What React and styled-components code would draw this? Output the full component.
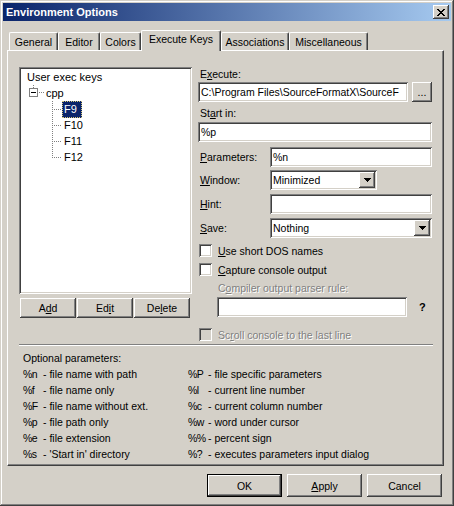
import React from 'react';
import styled, {createGlobalStyle, css} from 'styled-components';

const face = '#D4D0C8';
const light = '#FFFFFF';
const shadow = '#808080';
const darkShadow = '#404040';
const navy = '#0A246A';

const GlobalStyle = createGlobalStyle`
	html, body {
		margin: 0;
		padding: 0;
		background: ${face};
	}
	body {
		font-family: "Liberation Sans", Arial, sans-serif;
		font-size: 10.5px;
		color: #000;
	}
	* {
		box-sizing: border-box;
	}
`;

const raised = css`
	box-shadow: inset -1px -1px ${darkShadow}, inset 1px 1px ${light}, inset -2px -2px ${shadow}, inset 2px 2px ${face};
`;

const sunken = css`
	box-shadow: inset 1px 1px ${shadow}, inset -1px -1px ${light}, inset 2px 2px ${darkShadow}, inset -2px -2px ${face};
`;

const disabledText = css`
	color: ${shadow};
	text-shadow: 1px 1px 0 ${light};
`;

const Window = styled.div`
	width: 454px;
	height: 506px;
	padding: 3px;
	display: flex;
	flex-direction: column;
	background: ${face};
	box-shadow: inset -1px -1px ${darkShadow}, inset 1px 1px ${face}, inset -2px -2px ${shadow}, inset 2px 2px ${light};
`;

const TitleBar = styled.div`
	height: 18px;
	flex: none;
	display: flex;
	align-items: center;
	justify-content: space-between;
	padding: 0 2px 0 3px;
	background: linear-gradient(to right, ${navy}, #A6CAF0);
	color: #fff;
	font-size: 11px;
	font-weight: bold;
`;

const CloseButton = styled.span`
	width: 16px;
	height: 14px;
	display: flex;
	align-items: center;
	justify-content: center;
	background: ${face};
	${raised};
`;

const Body = styled.div`
	flex: 1;
	display: flex;
	flex-direction: column;
	padding: 9px 7px 0 4px;
`;

const TabStrip = styled.div`
	height: 20px;
	display: flex;
	align-items: flex-end;
	padding-left: 2px;
	position: relative;
	z-index: 1;
`;

const Tab = styled.div`
	width: ${p => p.$w}px;
	height: ${p => p.$active ? 21 : 18}px;
	margin-bottom: ${p => p.$active ? -1 : 0}px;
	padding-bottom: ${p => p.$active ? 4 : 0}px;
	display: flex;
	align-items: center;
	justify-content: center;
	background: ${face};
	border-top: 1px solid ${light};
	border-left: 1px solid ${light};
	border-right: 1px solid ${darkShadow};
	border-radius: 2px 2px 0 0;
	box-shadow: inset -1px 0 ${shadow};
	white-space: nowrap;
`;

const Panel = styled.div`
	height: 416px;
	flex: none;
	display: flex;
	flex-direction: column;
	padding: 16px 10px 0 11px;
	border-top: 1px solid ${light};
	border-left: 1px solid ${light};
	border-right: 1px solid ${darkShadow};
	border-bottom: 1px solid ${darkShadow};
	box-shadow: inset -1px -1px ${shadow};
`;

const TopGrid = styled.div`
	display: grid;
	grid-template-columns: 173px 234px;
	column-gap: 6px;
`;

const LeftColumn = styled.div`
	display: flex;
	flex-direction: column;
`;

const TreeBox = styled.div`
	height: 227px;
	padding: 2px;
	background: #fff;
	${sunken};
`;

const TreeRow = styled.div`
	height: 16px;
	display: flex;
	align-items: center;
	padding-left: ${p => p.$indent}px;
	white-space: nowrap;
`;

const NodeText = styled.span`
	height: 17px;
	line-height: 15px;
	padding: 0 4px 0 1px;
	font-size: 11px;
	border: 1px ${p => p.$selected ? 'dotted #D8C878' : 'solid transparent'};
	background: ${p => p.$selected ? navy : 'transparent'};
	color: ${p => p.$selected ? '#fff' : '#000'};
`;

const ButtonRow = styled.div`
	display: grid;
	grid-template-columns: repeat(3, 1fr);
	column-gap: 1px;
	margin-top: 4px;
	padding: 0 2px 0 1px;
`;

const Button = styled.button`
	height: ${p => p.$h || 23}px;
	width: ${p => p.$w ? `${p.$w}px` : 'auto'};
	padding: 0;
	border: ${p => p.$default ? '1px solid #000' : 'none'};
	background: ${face};
	font: inherit;
	color: #000;
	${raised};
`;

const RightColumn = styled.div`
	display: flex;
	flex-direction: column;
`;

const Label = styled.div`
	height: 14px;
	line-height: 14px;
	margin-top: ${p => p.$mt || 0}px;
	padding-left: ${p => p.$indent || 2}px;
	white-space: nowrap;
	${p => p.$disabled && disabledText};
`;

const Row = styled.div`
	display: flex;
	align-items: center;
	margin-top: ${p => p.$mt || 0}px;
	padding-left: ${p => p.$indent || 0}px;
`;

const RowLabel = styled.span`
	width: 72px;
	flex: none;
	padding-left: 2px;
	white-space: nowrap;
`;

const Field = styled.div`
	height: 20px;
	width: ${p => p.$w ? `${p.$w}px` : 'auto'};
	min-width: 0;
	flex: ${p => p.$w ? 'none' : 1};
	display: flex;
	align-items: center;
	justify-content: space-between;
	padding: 0 2px 0 3px;
	background: #fff;
	white-space: nowrap;
	overflow: hidden;
	${sunken};
`;

const DropButton = styled.span`
	width: 16px;
	height: 16px;
	flex: none;
	display: flex;
	align-items: center;
	justify-content: center;
	background: ${face};
	${raised};
`;

const Browse = styled(Button)`
	width: 20px;
	height: 20px;
	margin-left: 4px;
	flex: none;
	line-height: 10px;
`;

const Check = styled.label`
	display: flex;
	align-items: center;
	gap: 6px;
	height: 13px;
	margin-top: ${p => p.$mt}px;
	padding-left: 1px;
	white-space: nowrap;
	${p => p.$disabled && disabledText};
`;

const CheckBox = styled.span`
	width: 13px;
	height: 13px;
	flex: none;
	background: ${p => p.$disabled ? face : '#fff'};
	${sunken};
`;

const Hint = styled.span`
	margin-left: 12px;
	font-size: 11px;
	font-weight: bold;
`;

const Separator = styled.div`
	margin-top: 3px;
	border-top: 1px solid ${shadow};
	border-bottom: 1px solid ${light};
`;

const ParamGrid = styled.div`
	display: grid;
	grid-template-columns: 165px 1fr;
	margin-top: 4px;
	padding-left: 4px;
	line-height: 16px;
`;

const ParamTitle = styled.div`
	grid-column: 1 / -1;
`;

const Param = styled.div`
	white-space: nowrap;
`;

const Code = styled.span`
	display: inline-block;
	width: 20px;
	letter-spacing: -0.5px;
`;

const Footer = styled.div`
	display: flex;
	justify-content: flex-end;
	gap: 5px;
	margin-top: 8px;
	padding-right: 2px;
`;

// pixel glyphs
const Pixels = ({rows, color = '#000'}) => (
	<svg width={rows[0].length} height={rows.length} shapeRendering="crispEdges">
		{rows.flatMap((row, y) => [...row].map((c, x) => c === '#'
			? <rect key={`${x}-${y}`} x={x} y={y} width="1" height="1" fill={color}/>
			: null))}
	</svg>
);

const closeGlyph = [
	'##....##',
	'.##..##.',
	'..####..',
	'...##...',
	'..####..',
	'.##..##.',
	'##....##',
];

const arrowGlyph = [
	'#######',
	'.#####.',
	'..###..',
	'...#...',
];

const dots = (x1, y1, x2, y2) => {
	const out = [];
	for (let x = x1; x <= x2; x += 2) {
		for (let y = y1; y <= y2; y += 2) {
			out.push(<rect key={`${x}-${y}`} x={x} y={y} width="1" height="1" fill={shadow}/>);
		}
	}
	return out;
};

const Expander = () => (
	<svg width="15" height="16" shapeRendering="crispEdges">
		{dots(4, 0, 4, 2)}
		<rect x="0.5" y="3.5" width="8" height="8" fill="#fff" stroke={shadow}/>
		<rect x="2" y="7" width="5" height="1" fill="#000"/>
		{dots(10, 7, 14, 7)}
	</svg>
);

const Branch = ({last}) => (
	<svg width="10" height="16" shapeRendering="crispEdges">
		{dots(0, 0, 0, last ? 8 : 15)}
		{dots(2, 8, 8, 8)}
	</svg>
);

const tabs = [
	{label: 'General', w: 49},
	{label: 'Editor', w: 42},
	{label: 'Colors', w: 41},
	{label: 'Execute Keys', w: 80, active: true},
	{label: 'Associations', w: 68},
	{label: 'Miscellaneous', w: 79},
];

const keys = ['F9', 'F10', 'F11', 'F12'];

const params = [
	['%n', 'file name with path'],
	['%P', 'file specific parameters'],
	['%f', 'file name only'],
	['%l', 'current line number'],
	['%F', 'file name without ext.'],
	['%c', 'current column number'],
	['%p', 'file path only'],
	['%w', 'word under cursor'],
	['%e', 'file extension'],
	['%%', 'percent sign'],
	['%s', "'Start in' directory"],
	['%?', 'executes parameters input dialog'],
];

const ComboBox = ({value, w}) => (
	<Field $w={w}>
		<span>{value}</span>
		<DropButton><Pixels rows={arrowGlyph}/></DropButton>
	</Field>
);

const App = () => {
	return (
		<>
			<GlobalStyle/>
			<Window>
				<TitleBar>
					<span>Environment Options</span>
					<CloseButton><Pixels rows={closeGlyph}/></CloseButton>
				</TitleBar>
				<Body>
					<TabStrip>
						{tabs.map(t => <Tab key={t.label} $w={t.w} $active={t.active}>{t.label}</Tab>)}
					</TabStrip>
					<Panel>
						<TopGrid>
							<LeftColumn>
								<TreeBox>
									<TreeRow $indent={4}><NodeText>User exec keys</NodeText></TreeRow>
									<TreeRow $indent={8}><Expander/><NodeText>cpp</NodeText></TreeRow>
									{keys.map((k, i) => (
										<TreeRow key={k} $indent={31}>
											<Branch last={i === keys.length - 1}/>
											<NodeText $selected={i === 0}>{k}</NodeText>
										</TreeRow>
									))}
								</TreeBox>
								<ButtonRow>
									<Button $h={20}>A<u>d</u>d</Button>
									<Button $h={20}>Ed<u>i</u>t</Button>
									<Button $h={20}>De<u>l</u>ete</Button>
								</ButtonRow>
							</LeftColumn>
							<RightColumn>
								<Label>E<u>x</u>ecute:</Label>
								<Row $mt={1}>
									<Field>C:\Program Files\SourceFormatX\SourceF</Field>
									<Browse>...</Browse>
								</Row>
								<Label $mt={4}>St<u>a</u>rt in:</Label>
								<Row $mt={2}>
									<Field>%p</Field>
								</Row>
								<Row $mt={5}>
									<RowLabel><u>P</u>arameters:</RowLabel>
									<Field>%n</Field>
								</Row>
								<Row $mt={3}>
									<RowLabel><u>W</u>indow:</RowLabel>
									<ComboBox value="Minimized" w={107}/>
								</Row>
								<Row $mt={4}>
									<RowLabel><u>H</u>int:</RowLabel>
									<Field/>
								</Row>
								<Row $mt={4}>
									<RowLabel><u>S</u>ave:</RowLabel>
									<ComboBox value="Nothing"/>
								</Row>
								<Check $mt={6}><CheckBox/><span><u>U</u>se short DOS names</span></Check>
								<Check $mt={6}><CheckBox/><span><u>C</u>apture console output</span></Check>
								<Label $mt={5} $indent={20} $disabled>C<u>o</u>mpiler output parser rule:</Label>
								<Row $mt={2} $indent={19}>
									<Field $w={190}/>
									<Hint>?</Hint>
								</Row>
								<Check $mt={11} $disabled><CheckBox $disabled/><span>Sc<u>r</u>oll console to the last line</span></Check>
							</RightColumn>
						</TopGrid>
						<Separator/>
						<ParamGrid>
							<ParamTitle>Optional parameters:</ParamTitle>
							{params.map(([code, text]) => (
								<Param key={code}><Code>{code}</Code>- {text}</Param>
							))}
						</ParamGrid>
					</Panel>
					<Footer>
						<Button $w={75} $default>OK</Button>
						<Button $w={75}><u>A</u>pply</Button>
						<Button $w={75}>Cancel</Button>
					</Footer>
				</Body>
			</Window>
		</>
	);
};

export default App;
